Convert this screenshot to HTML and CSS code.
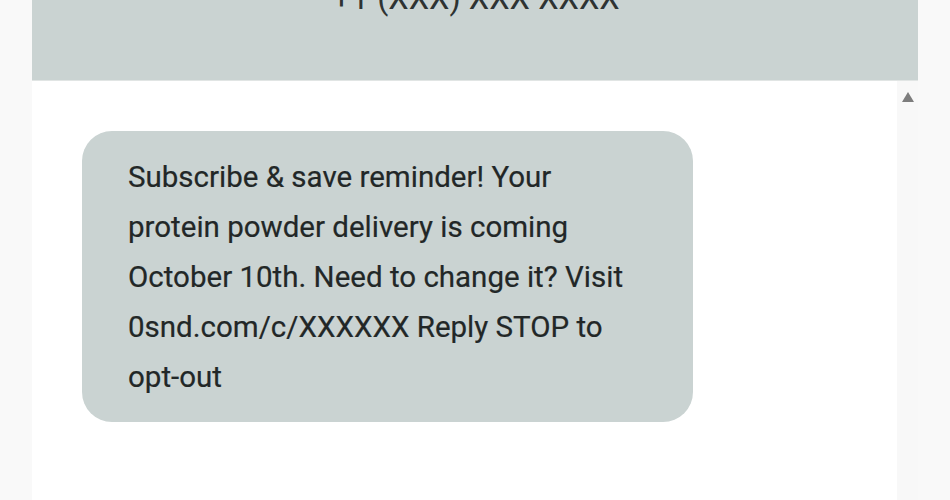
FILE: index.html
```html
<!DOCTYPE html>
<html lang="en">
<head>
<meta charset="utf-8">
<title>Message</title>
<link rel="stylesheet" href="styles.css">
</head>
<body>
<div class="phone">
  <header class="header">
    <div class="number">+1 (XXX) XXX-XXXX</div>
  </header>
  <div class="body">
    <main class="thread">
      <div class="bubble">Subscribe &amp; save reminder! Your protein powder delivery is coming October 10th. Need to change it? Visit 0snd.com/c/XXXXXX Reply STOP to opt-out</div>
    </main>
    <div class="scrollbar">
      <span class="arrow-up"></span>
    </div>
  </div>
</div>
</body>
</html>
```

FILE: styles.css
```css
html, body {
  margin: 0;
  padding: 0;
  height: 100%;
  overflow: hidden;
}
body {
  background: #f9f9f9;
  font-family: Roboto, "Liberation Sans", sans-serif;
  color: #222727;
}
.phone {
  margin-left: 32px;
  width: 886px;
  height: 100%;
  display: flex;
  flex-direction: column;
}
.header {
  height: 81px;
  flex: none;
  background: #cad3d2;
  border-bottom: 1px solid #e1e5e4;
  box-sizing: border-box;
  overflow: hidden;
  display: flex;
  justify-content: center;
}
.number {
  font-size: 32.5px;
  line-height: 32px;
  margin-top: -18px;
  padding-left: 2px;
  color: #2e3333;
}
.body {
  flex: 1;
  display: flex;
}
.thread {
  flex: 1;
  background: #ffffff;
  padding: 50px 0 0 50px;
}
.bubble {
  width: 611px;
  box-sizing: border-box;
  background: #cad3d2;
  border-radius: 30px;
  padding: 21px 60px 20px 46px;
  font-size: 29.5px;
  line-height: 50px;
  -webkit-text-stroke: 0.2px #222727;
}
.scrollbar {
  width: 21px;
  flex: none;
  background: #f8f8f8;
  display: flex;
  justify-content: center;
  padding-top: 11px;
  box-sizing: border-box;
}
.arrow-up {
  width: 0;
  height: 0;
  border-left: 6px solid transparent;
  border-right: 6px solid transparent;
  border-bottom: 10px solid #7d7d7d;
}
```
